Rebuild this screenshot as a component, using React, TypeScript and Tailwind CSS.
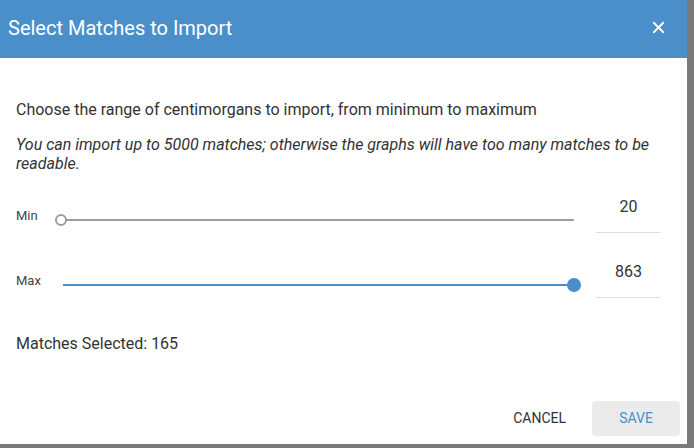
import { X } from 'lucide-react';

function Slider({ filled }: { filled: boolean }) {
  return (
    <div className="relative w-[514px] h-[14px]">
      {filled ? (
        <>
          <div className="absolute left-[3px] right-0 top-[6px] h-[2px] bg-[#4a8fca]" />
          <div className="absolute right-[-7px] top-0 w-[14px] h-[14px] rounded-full bg-[#4a8fca]" />
        </>
      ) : (
        <>
          <div className="absolute left-[6px] right-0 top-[6px] h-[2px] bg-[#9e9e9e]" />
          <div className="absolute left-[-5px] top-[1px] w-[12px] h-[12px] rounded-full border-2 border-[#9e9e9e] bg-white" />
        </>
      )}
    </div>
  );
}

function Row({ label, value, filled }: { label: string; value: string; filled: boolean }) {
  return (
    <div className="flex items-start">
      <div className="w-[44px] mt-[13px] text-[13px] leading-[16px] text-[#444]">{label}</div>
      <div className="mt-[18px]">
        <Slider filled={filled} />
      </div>
      <div className="ml-[22px] w-[65px] h-[38px] border-b border-[#e0e0e0] text-center text-[16px] leading-[24px] text-[#333]">
        {value}
      </div>
    </div>
  );
}

export default function App() {
  return (
    <div
      className="w-[694px] h-[448px] bg-[#7a7a7a] overflow-hidden"
      style={{ fontFamily: 'Roboto, "Liberation Sans", sans-serif' }}
    >
      <div className="w-[687px] h-[444px] bg-white flex flex-col">
        {/* header */}
        <div className="h-[58px] bg-[#4a8fca] flex items-center justify-between pl-2 pr-[19px] pb-[3px]">
          <h1 className="text-[20px] text-white font-normal">Select Matches to Import</h1>
          <X className="w-[19px] h-[19px] text-white" strokeWidth={2.25} />
        </div>

        {/* body */}
        <div className="px-4 pt-[40px] text-[#333]">
          <p className="text-[16px] leading-[24px]">
            Choose the range of centimorgans to import, from minimum to maximum
          </p>
          <p className="mt-[13px] text-[16px] leading-[19px] italic pr-4">
            You can import up to 5000 matches; otherwise the graphs will have too many matches to be readable.
          </p>

          <div className="mt-[22px] flex flex-col gap-[27px]">
            <Row label="Min" value="20" filled={false} />
            <Row label="Max" value="863" filled />
          </div>

          <p className="mt-[34px] text-[16px] leading-[24px]">Matches Selected: 165</p>
        </div>

        {/* actions */}
        <div className="mt-auto mb-[8px] flex justify-end items-center gap-[10px] pr-[7px]">
          <button className="h-[35px] px-[16px] text-[14px] text-[#333] uppercase">Cancel</button>
          <button className="w-[88px] h-[35px] rounded-sm bg-[#ebebeb] text-[14px] text-[#4a8fca] uppercase">
            Save
          </button>
        </div>
      </div>
    </div>
  );
}
